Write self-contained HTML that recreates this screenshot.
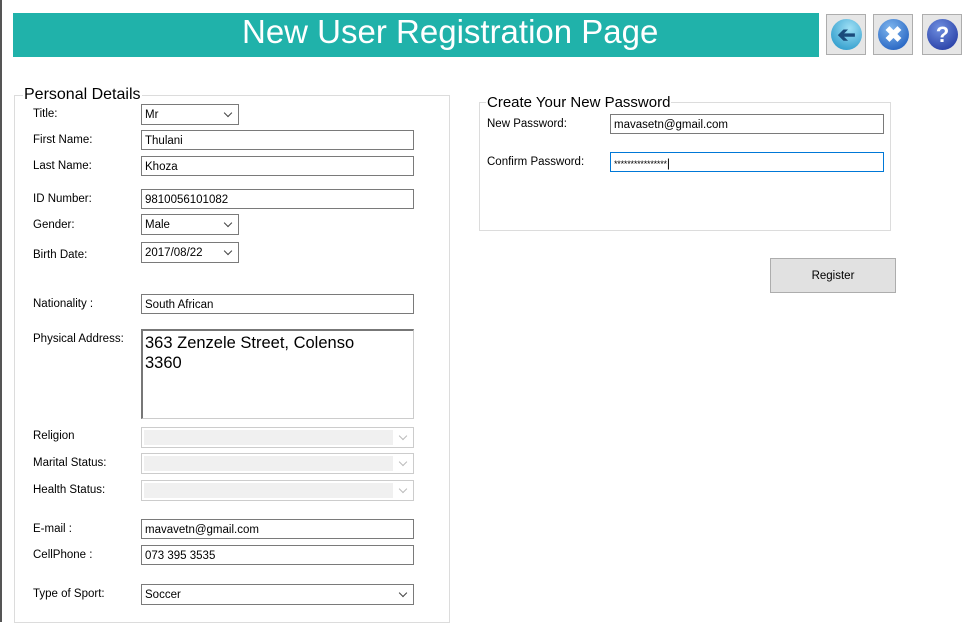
<!DOCTYPE html>
<html><head><style>
body{margin:0;width:976px;height:622px;background:#fff;position:relative;overflow:hidden;font-family:"Liberation Sans",sans-serif;font-size:11.5px;color:#000}
.a{position:absolute}
.hdr{left:13px;top:13px;width:806px;height:44px;background:#20b2aa;color:#fff;font-size:33px;line-height:38px;}
.btn{width:40px;height:41px;top:14px;border:1px solid #adadad;background:#e6e6e6;box-sizing:border-box}
.btn div{position:absolute;left:4px;top:4px;width:31px;height:31px;border-radius:50%;color:#fff;font-weight:bold;text-align:center;line-height:31px;font-size:22px}
.gb{border:1px solid #dcdcdc}
.lg{background:#fff;font-size:16px;padding:0 1px;line-height:16px}
.lb{left:33px}
.in{left:141px;width:273px;height:20px;border:1px solid #7a7a7a;box-sizing:border-box;padding-left:3px;line-height:20px}
.cb{left:141px;height:21px;border:1px solid #7a7a7a;box-sizing:border-box;padding-left:3px;line-height:20px}
.cb:after{content:"";position:absolute;right:7px;top:5px;width:5px;height:5px;border-right:1px solid #444;border-bottom:1px solid #444;transform:rotate(45deg)}
.dis{left:141px;width:273px;height:21px;border:1px solid #ccc;box-sizing:border-box}
.dis i{position:absolute;left:2px;top:2px;width:249px;height:15px;background:#f0f0f0}
.dis:after{content:"";position:absolute;right:7px;top:5px;width:5px;height:5px;border-right:1px solid #bbb;border-bottom:1px solid #bbb;transform:rotate(45deg)}
</style></head><body>
<div class="a" style="left:0;top:0;width:2px;height:622px;background:#555"></div>
<div class="a hdr"><span class="a" style="left:229px;top:0;white-space:nowrap">New User Registration Page</span></div>
<div class="a btn" style="left:826px"><div style="background:radial-gradient(circle at 40% 30%,#9fe0f5,#1a8fc4);color:#1a4a7a;transform:scaleX(-1)">&#10132;</div></div>
<div class="a btn" style="left:873px"><div style="background:radial-gradient(circle at 40% 30%,#7fb6ee,#1252b8)">&#10006;</div></div>
<div class="a btn" style="left:922px"><div style="background:radial-gradient(circle at 40% 30%,#6f8fe0,#1a2f9a)">?</div></div>

<div class="a gb" style="left:14px;top:95px;width:434px;height:526px"></div>
<div class="a lg" style="left:23px;top:87px">Personal Details</div>
<div class="a lb" style="top:108px">Title:</div><div class="a cb" style="top:104px;width:98px">Mr</div>
<div class="a lb" style="top:134px">First Name:</div><div class="a in" style="top:130px">Thulani</div>
<div class="a lb" style="top:160px">Last Name:</div><div class="a in" style="top:156px">Khoza</div>
<div class="a lb" style="top:193px">ID Number:</div><div class="a in" style="top:189px">9810056101082</div>
<div class="a lb" style="top:219px">Gender:</div><div class="a cb" style="top:214px;width:98px">Male</div>
<div class="a lb" style="top:249px">Birth Date:</div><div class="a cb" style="top:242px;width:98px">2017/08/22</div>
<div class="a lb" style="top:298px">Nationality :</div><div class="a in" style="top:294px">South African</div>
<div class="a lb" style="top:333px">Physical Address:</div>
<div class="a" style="left:141px;top:329px;width:273px;height:90px;border:1px solid #ccc;border-top:2px solid #777;border-left:2px solid #777;box-sizing:border-box;font-size:16.5px;padding:2px 2px;line-height:20px">363 Zenzele Street, Colenso<br>3360</div>
<div class="a lb" style="top:430px">Religion</div><div class="a dis" style="top:427px"><i></i></div>
<div class="a lb" style="top:457px">Marital Status:</div><div class="a dis" style="top:453px"><i></i></div>
<div class="a lb" style="top:484px">Health Status:</div><div class="a dis" style="top:480px"><i></i></div>
<div class="a lb" style="top:523px">E-mail :</div><div class="a in" style="top:519px">mavavetn@gmail.com</div>
<div class="a lb" style="top:549px">CellPhone :</div><div class="a in" style="top:545px">073 395 3535</div>
<div class="a lb" style="top:588px">Type of Sport:</div><div class="a cb" style="top:584px;width:273px">Soccer</div>

<div class="a gb" style="left:479px;top:102px;width:410px;height:127px"></div>
<div class="a lg" style="left:486px;top:95px;font-size:15px">Create Your New Password</div>
<div class="a" style="left:487px;top:118px">New Password:</div>
<div class="a in" style="left:610px;top:114px;width:274px">mavasetn@gmail.com</div>
<div class="a" style="left:487px;top:156px">Confirm Password:</div>
<div class="a in" style="left:610px;top:152px;width:274px;border-color:#0078d7;font-size:9px;letter-spacing:-0.2px;line-height:22px">****************<span style="letter-spacing:0;font-size:12px;line-height:14px">|</span></div>
<div class="a" style="left:770px;top:258px;width:126px;height:35px;background:#e1e1e1;border:1px solid #adadad;box-sizing:border-box;text-align:center;line-height:35px">Register</div>
</body></html>
